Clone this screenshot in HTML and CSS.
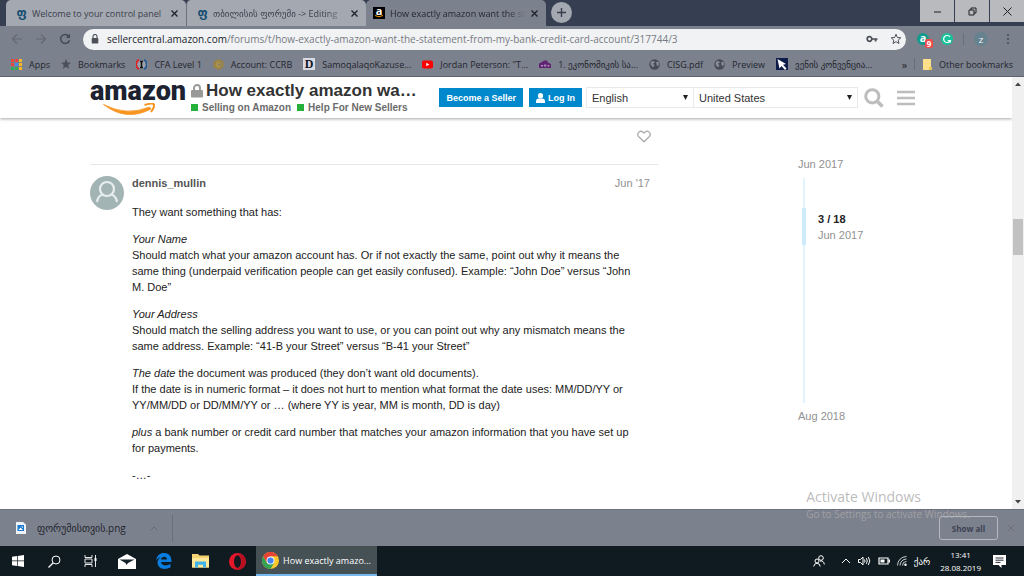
FILE: index.html
```html
<!DOCTYPE html>
<html lang="en">
<head>
    <meta charset="UTF-8">
    <meta name="viewport" content="width=device-width, initial-scale=1.0">
    <title>How exactly amazon want the statement</title>
    <link rel="stylesheet" href="styles.css">
</head>
<body>
    <!-- Tabs -->
    <div class="tab-strip">
        <div class="tab">
            <span class="favicon-geo">ფ</span>
            <span class="tab-title">Welcome to your control panel</span>
            <button class="tab-close" aria-label="Close tab"><svg width="7" height="7" viewBox="0 0 7 7"><path d="M.5 .5l6 6M6.5 .5l-6 6"/></svg></button>
        </div>
        <div class="tab">
            <span class="favicon-geo">ფ</span>
            <span class="tab-title fade">თბილისის ფორუმი -&gt; Editing</span>
            <button class="tab-close" aria-label="Close tab"><svg width="7" height="7" viewBox="0 0 7 7"><path d="M.5 .5l6 6M6.5 .5l-6 6"/></svg></button>
        </div>
        <div class="tab active">
            <span class="favicon-amazon">a<svg width="10" height="3" viewBox="0 0 10 3"><path d="M1 .5q4 2.5 8 0" fill="none" stroke="#f90"/></svg></span>
            <span class="tab-title fade">How exactly amazon want the sta</span>
            <button class="tab-close" aria-label="Close tab"><svg width="7" height="7" viewBox="0 0 7 7"><path d="M.5 .5l6 6M6.5 .5l-6 6"/></svg></button>
        </div>
        <button class="new-tab" aria-label="New tab"><svg width="9" height="9" viewBox="0 0 9 9"><path d="M4.5 0v9M0 4.5h9" stroke="#343c4e" stroke-width="1.4"/></svg></button>
        <div class="window-controls">
            <button aria-label="Minimize"><svg width="9" height="9" viewBox="0 0 9 9"><path d="M1 5h7"/></svg></button>
            <button aria-label="Restore"><svg width="9" height="9" viewBox="0 0 9 9"><path d="M1 3h5v5h-5zM3 3v-2h5v5h-2"/></svg></button>
            <button aria-label="Close"><svg width="9" height="9" viewBox="0 0 9 9"><path d="M.5 .5l8 8M8.500 .5l-8 8"/></svg></button>
        </div>
    </div>

    <!-- Address bar -->
    <div class="toolbar">
        <button class="nav-btn" aria-label="Back"><svg width="12" height="12" viewBox="0 0 12 12"><path d="M11 6h-9M6 1.500l-4.500 4.500l4.500 4.500" stroke="#636875"/></svg></button>
        <button class="nav-btn" aria-label="Forward"><svg width="12" height="12" viewBox="0 0 12 12"><path d="M1 6h9M6 1.500l4.500 4.500l-4.500 4.500" stroke="#636875"/></svg></button>
        <button class="nav-btn" aria-label="Reload"><svg width="12" height="12" viewBox="0 0 12 12"><path d="M9.800 3.200a4.500 4.500 0 1 0 .7 4" stroke="#444a57" stroke-width="1.500"/><path d="M11 .8v4.200h-4.200z" fill="#444a57" stroke="none"/></svg></button>
        <div class="address">
            <svg width="8" height="10" viewBox="0 0 8 10"><path d="M2 4.500v-2a2 2 0 0 1 4 0v2" fill="none" stroke="#4c5057" stroke-width="1.100"/><rect x=".7" y="4" width="6.600" height="5.500" rx=".7" fill="#4c5057"/></svg>
            <span class="url"><b>sellercentral.amazon.com</b>/forums/t/how-exactly-amazon-want-the-statement-from-my-bank-credit-card-account/317744/3</span>
            <svg width="12" height="8" viewBox="0 0 12 8"><circle cx="3.500" cy="4" r="2.300" fill="none" stroke="#4c5057" stroke-width="1.700"/><path d="M6 3.200h5.500v1.600h-1v1.700h-1.800v-1.700h-2.700z" fill="#4c5057"/></svg>
            <svg width="12" height="12" viewBox="0 0 12 12"><path d="M6 1.300l1.400 3.200l3.400.3l-2.600 2.300l.8 3.400l-3-1.800l-3 1.800l.8-3.400l-2.600-2.300l3.400-.3z" fill="none" stroke="#4c5057"/></svg>
        </div>
        <span class="ext ext-teal">a<em>9</em></span>
        <span class="ext ext-green"><svg width="12" height="12" viewBox="0 0 12 12"><path d="M9 4a3.500 3.500 0 1 0 .3 3.500h-2.600M9.300 7.500v2" fill="none" stroke="#fff" stroke-width="1.200"/></svg></span>
        <i class="divider"></i>
        <span class="ext profile">Z</span>
        <button class="menu-dots" aria-label="Menu"><svg width="4" height="12" viewBox="0 0 4 12"><g fill="#494e5b"><circle cx="2" cy="2" r="1.100"/><circle cx="2" cy="6" r="1.100"/><circle cx="2" cy="10" r="1.100"/></g></svg></button>
    </div>

    <!-- Bookmarks -->
    <nav class="bookmarks">
        <a href="#"><svg width="11" height="11" viewBox="0 0 11 11"><path d="M0 0h3v3h-3zM4 0h3v3h-3zM0 4h3v3h-3z" fill="#e8453c"/><path d="M8 0h3v3h-3zM8 4h3v3h-3zM8 8h3v3h-3z" fill="#f5b921"/><path d="M4 4h3v3h-3z" fill="#4687f1"/><path d="M0 8h3v3h-3zM4 8h3v3h-3z" fill="#2dab57"/></svg>Apps</a>
        <a href="#"><svg width="10" height="10" viewBox="0 0 12 12"><path d="M6 0l1.700 4.100l4.300.4l-3.300 2.800l1 4.400l-3.700-2.300l-3.700 2.300l1-4.400l-3.300-2.800l4.300-.4z" fill="#4b4f59"/></svg>Bookmarks</a>
        <a href="#"><svg width="11" height="11" viewBox="0 0 11 11"><circle cx="5.500" cy="5.500" r="4" fill="#9ba0aa"/><path d="M3 .8a5.300 5.300 0 0 0 0 9.400" fill="none" stroke="#e81c22" stroke-width="1.700"/><path d="M8 .8a5.300 5.300 0 0 1 0 9.400" fill="none" stroke="#225b98" stroke-width="1.700"/><path d="M4 2.500h3M4 8.500h3M5.500 2.500v6" stroke="#111" stroke-width="1.500"/></svg>CFA Level 1</a>
        <a href="#"><svg width="11" height="11" viewBox="0 0 12 12"><path d="M6 1l4.500 2.500v5l-4.500 2.500l-4.500-2.500v-5z" fill="#93845c" stroke="#a18335" stroke-width="1.500"/><path d="M7.800 4.500l-2-1l-2.200 1.500v2l2.200 1.500l2-1" fill="none" stroke="#c6a13c"/></svg>Account: CCRB</a>
        <a href="#"><span class="d-icon">D</span>SamoqalaqoKazuse...</a>
        <a href="#"><svg width="11" height="9" viewBox="0 0 11 9"><rect width="11" height="8" y=".5" rx="1.800" fill="#f00"/><path d="M4.300 2.700v3.600l3-1.800z" fill="#fff"/></svg>Jordan Peterson: "T...</a>
        <a href="#"><svg width="12" height="9" viewBox="0 0 12 9"><path d="M0 3.500l3-1.500l2-1.500h3l1 2l3 1.500v4h-12z" fill="#602473"/><path d="M2 5h2v1.500h-2zM5.200 4.500h2v2h-2zM8.500 5h1.800v1.500h-1.800z" fill="#b296bd"/></svg>1. ეკონომიკის სა...</a>
        <a href="#"><svg width="11" height="11" viewBox="0 0 11 11"><circle cx="5.500" cy="5.500" r="5.200" fill="#474b55"/><path d="M2 2.500l3-.5l1 1.500l-2 1l1.500 2l-1.500 2l-2.500-3zM7 3l2.500-.3l.5 3l-2 1.500z" fill="#858b97"/></svg>CISG.pdf</a>
        <a href="#"><svg width="11" height="11" viewBox="0 0 11 11"><circle cx="5.500" cy="5.500" r="5.200" fill="#474b55"/><path d="M2 2.500l3-.5l1 1.500l-2 1l1.500 2l-1.500 2l-2.500-3zM7 3l2.500-.3l.5 3l-2 1.500z" fill="#858b97"/></svg>Preview</a>
        <a href="#"><svg width="12" height="12" viewBox="0 0 12 12"><path d="M0 0h12v12h-12z" fill="#0d1c49"/><path d="M1.500 1l8.500 5l-3 .8l3.500 3.700l-1.500 1.500l-3.500-4l-2 2.500z" fill="#fff"/></svg>ვენის კონვენცია...</a>
        <button class="overflow" aria-label="More bookmarks">»</button>
        <i class="divider"></i>
        <a href="#"><svg width="10" height="11" viewBox="0 0 10 11"><path d="M1 0h8v11h-8z" fill="#ffe08a"/><path d="M7 8h3v3h-3z" fill="#eec455"/></svg>Other bookmarks</a>
    </nav>

    <!-- Forum page -->
    <div class="viewport">
        <div class="page">
            <header class="site-header">
                <a class="logo" href="#">amazon<svg width="56" height="12" viewBox="0 0 56 12"><path d="M.5 1.500q23 12 46 2.500l1.500 2q-25 13-47.500-4.500z" fill="#f79521" stroke="#f79521" stroke-width=".8"/><path d="M41.500 2q8.500-2.500 9.500-.5q.5 3-3 7.500" fill="none" stroke="#f79521" stroke-width="2"/></svg></a>
                <div class="topic">
                    <h1><svg width="12" height="14" viewBox="0 0 12 14"><path d="M3 7v-3a3 3 0 0 1 6 0v3" fill="none" stroke="#999" stroke-width="1.900"/><rect y="6" width="12" height="7.500" rx="1" fill="#999"/></svg><span>How exactly amazon wa…</span></h1>
                    <div class="categories">
                        <a href="#">Selling on Amazon</a>
                        <a href="#">Help For New Sellers</a>
                    </div>
                </div>
                <button class="btn">Become a Seller</button>
                <button class="btn"><svg width="9" height="10" viewBox="0 0 9 10"><circle cx="4.500" cy="2.700" r="2.600" fill="#fff"/><path d="M0 10v-1.500a3 3 0 0 1 3-3h3a3 3 0 0 1 3 3v1.500z" fill="#fff"/></svg>Log In</button>
                <div class="selects">
                    <div class="select language"><select aria-label="Language"><option>English</option></select></div>
                    <div class="select country"><select aria-label="Country"><option>United States</option></select></div>
                </div>
                <button class="icon-btn" aria-label="Search"><svg width="20" height="20" viewBox="0 0 20 20"><circle cx="8.300" cy="8.300" r="6.600" fill="none" stroke="#bdbdbd" stroke-width="3"/><path d="M13.200 13.200l5.300 5.300" stroke="#bdbdbd" stroke-width="3.600"/></svg></button>
                <button class="icon-btn" aria-label="Site menu"><svg width="18" height="16" viewBox="0 0 18 16"><path d="M0 2h18M0 8h18M0 14h18" stroke="#bdbdbd" stroke-width="2.500"/></svg></button>
            </header>

            <main class="content">
                <div class="posts">
                    <div class="post-actions">
                        <button class="icon-btn" aria-label="Like"><svg width="14" height="13" viewBox="0 0 14 13"><path d="M7 11.800l-5.200-5.100a3.100 3.100 0 0 1 4.300-4.500l.9.900l.9-.9a3.100 3.100 0 0 1 4.300 4.500z" fill="none" stroke="#aaa" stroke-width="1.200"/></svg></button>
                    </div>
                    <article class="post">
                        <svg class="avatar" width="34" height="34" viewBox="0 0 34 34"><circle cx="17" cy="17" r="17" fill="#a3b4b5"/><circle cx="17" cy="13" r="7" fill="none" stroke="#e8edee" stroke-width="2.200"/><path d="M7 26q1-6.500 6-7.500M27 26q-1-6.500-6-7.500" fill="none" stroke="#e8edee" stroke-width="2.200"/></svg>
                        <div class="post-body">
                            <div class="post-meta">
                                <a class="username" href="#">dennis_mullin</a>
                                <a class="post-date" href="#">Jun '17</a>
                            </div>
                            <div class="cooked">
                                <p>They want something that has:</p>
                                <p><em>Your Name</em><br>Should match what your amazon account has. Or if not exactly the same, point out why it means the same thing (underpaid verification people can get easily confused). Example: “John Doe” versus “John M. Doe”</p>
                                <p><em>Your Address</em><br>Should match the selling address you want to use, or you can point out why any mismatch means the same address. Example: “41-B your Street” versus “B-41 your Street”</p>
                                <p><em>The date</em> the document was produced (they don’t want old documents).<br>If the date is in numeric format – it does not hurt to mention what format the date uses: MM/DD/YY or YY/MM/DD or DD/MM/YY or … (where YY is year, MM is month, DD is day)</p>
                                <p><em>plus</em> a bank number or credit card number that matches your amazon information that you have set up for payments.</p>
                                <p>-…-</p>
                            </div>
                        </div>
                    </article>
                </div>
                <aside class="timeline">
                    <a href="#">Jun 2017</a>
                    <div class="track">
                        <div class="handle"><b>3 / 18</b><span>Jun 2017</span></div>
                    </div>
                    <a href="#">Aug 2018</a>
                </aside>
            </main>
        </div>
        <div class="scrollbar">
            <svg width="6" height="4" viewBox="0 0 6 4"><path d="M0 4l3-3.500l3 3.500z" fill="#444"/></svg>
            <div class="scroll-track"><div class="thumb"></div></div>
            <svg width="6" height="4" viewBox="0 0 6 4"><path d="M0 0l3 3.500l3-3.500z" fill="#444"/></svg>
        </div>
    </div>

    <!-- Downloads -->
    <div class="downloads">
        <svg width="10" height="12" viewBox="0 0 10 12"><path d="M0 0h7l3 2.500v9.500h-10z" fill="#eef2f6"/><path d="M1.500 3h6.500v6h-6.500z" fill="#1878d2"/><path d="M2.500 8l2-2.500l2.500 2.500zM5 4.500h2v1.500z" fill="#fff"/></svg>
        <span class="file-name">ფორუმისთვის.png</span>
        <svg class="chevron" width="8" height="5" viewBox="0 0 8 5"><path d="M.5 4.500l3.500-3.500l3.500 3.500" fill="none" stroke="#656a77"/></svg>
        <i class="divider"></i>
        <button class="show-all">Show all</button>
        <button class="icon-btn" aria-label="Close downloads"><svg width="8" height="8" viewBox="0 0 8 8"><path d="M.5 .5l7 7M7.500 .5l-7 7" stroke="#686d79"/></svg></button>
    </div>

    <!-- Taskbar -->
    <footer class="taskbar">
        <button class="task" aria-label="Start"><svg width="12" height="12" viewBox="0 0 12 12"><path d="M0 1.700l5-.7v4.600h-5zM5.700 .9l6.300-.9v5.600h-6.300zM0 6.300h5v4.700l-5-.7zM5.700 6.300h6.300v5.700l-6.300-.9z" fill="#fff"/></svg></button>
        <button class="task" aria-label="Search"><svg width="13" height="13" viewBox="0 0 13 13"><circle cx="8" cy="5" r="4" fill="none" stroke="#fff"/><path d="M5 8l-4.500 4.500" stroke="#fff" stroke-width="1.200"/></svg></button>
        <button class="task" aria-label="Task view"><svg width="13" height="12" viewBox="0 0 13 12"><path d="M1 0v2.500h7v-2.500M1 12v-2.500h7v2.500M1 4h7v4h-7zM11.500 0v12" fill="none" stroke="#e6e9ea"/><path d="M10.500 3h2v3h-2z" fill="#fff"/></svg></button>
        <button class="task app" aria-label="Mail"><svg width="18" height="15" viewBox="0 0 18 15"><path d="M0 5l9-5l9 5v10h-18z" fill="#fff"/><path d="M1.500 5.500h15l-6.500 3.500l-1.500 2l-1-2z" fill="#14222a"/></svg></button>
        <button class="task app" aria-label="Edge"><svg width="16" height="16" viewBox="0 0 16 16"><path d="M0 7.500c.7-5 4-7.500 8-7.500c5 0 7.700 3.700 7.500 9h-10.500c.3 3.500 5.500 4.500 9.500 2v3.300c-6 3.300-13 1.400-13-4.800c0-2.500 1.500-4.500 3.500-5.300c-2 .2-4 1.600-5 3.300zM5 6.500h6c0-4-5.500-3.500-6 0z" fill="#0a7ee0" fill-rule="evenodd"/></svg></button>
        <button class="task app" aria-label="File Explorer"><svg width="17" height="14" viewBox="0 0 17 14"><path d="M0 0h6l1.500 1.500h9.500v12h-17z" fill="#f4d470"/><path d="M0 4h17v9.500h-17z" fill="#ffe79a"/><path d="M3 13.500v-6h11v6h-3v-2.700h-5v2.700z" fill="#3fb2ea"/></svg></button>
        <button class="task app" aria-label="Opera"><svg width="17" height="17" viewBox="0 0 17 17"><circle cx="8.500" cy="8.500" r="8.500" fill="#e5172b"/><path d="M12 1c6 3 6 12 0 15c-2 1-4 .5-5.500-.8h3c4-2 4-11.400 0-13.400z" fill="#b60f20"/><ellipse cx="8.500" cy="8.500" rx="3.500" ry="6.300" fill="#14181f"/></svg></button>
        <button class="task running"><svg width="17" height="17" viewBox="0 0 18 18"><circle cx="9" cy="9" r="9" fill="#fbc92b"/><path d="M1.200 4.500a9 9 0 0 1 15.600 0h-7.800l-3.900 6.700z" fill="#e54335"/><path d="M1.200 4.500l3.900 6.800l7.800 0l-3.900 6.700a9 9 0 0 1-7.800-13.500z" fill="#35a155"/><circle cx="9" cy="9" r="4.200" fill="#fff"/><circle cx="9" cy="9" r="3.300" fill="#4383f2"/></svg>How exactly amazo...</button>
        <div class="tray">
            <svg width="12" height="12" viewBox="0 0 12 12"><g fill="none" stroke="#fff"><circle cx="8" cy="3" r="2.300"/><circle cx="4" cy="6" r="2"/><path d="M.7 11.500q.3-3 3.300-3.300q3 .3 3.200 3.300M7 6q4-.5 4.300 3.500"/></g></svg>
            <svg class="tray-up" width="10" height="6" viewBox="0 0 10 6"><path d="M1 5l4-4l4 4" fill="none" stroke="#fff"/></svg>
            <svg width="13" height="10" viewBox="0 0 13 10"><path d="M.5 3.500h2l2.500-2.500v8l-2.500-2.500h-2zM6.500 3.500q1 1.500 0 3M8.300 2.200q2 2.800 0 5.600M10.300 1q3 4 0 8" fill="none" stroke="#fff"/></svg>
            <svg width="12" height="8" viewBox="0 0 12 8"><path d="M1 1h9v6h-9z" fill="none" stroke="#fff" stroke-width="1.200"/><path d="M2.500 2.500h4v3h-4zM10.500 2.500h1.500v3h-1.500z" fill="#fff"/></svg>
            <svg width="10" height="10" viewBox="0 0 10 10"><path d="M.5 9.500a9 9 0 0 1 9-9M3 9.500a6.500 6.500 0 0 1 6.500-6.500M5.500 9.500a4 4 0 0 1 4-4" fill="none" stroke="#c9ced0"/><circle cx="8.500" cy="8.700" r="1.200" fill="#fff"/></svg>
            <span class="lang">ქარ</span>
            <div class="clock"><span>13:41</span><span>28.08.2019</span></div>
            <svg width="13" height="13" viewBox="0 0 13 13"><path d="M0 0h13v10h-4.500v3l-3-3h-5.500z" fill="#fff"/><path d="M2.500 3h8M2.500 5.200h8M2.500 7.400h5" stroke="#14181f" stroke-width=".9"/></svg>
        </div>
    </footer>

    <div class="watermark">
        <strong>Activate Windows</strong>
        <span>Go to Settings to activate Windows.</span>
    </div>
</body>
</html>
```
FILE: styles.css
```css
* {
    box-sizing: border-box;
}
body {
    margin: 0;
    height: 100vh;
    display: flex;
    flex-direction: column;
    overflow: hidden;
    font-family: "Open Sans", "DejaVu Sans", sans-serif;
    font-size: 9px;
    color: #23262d;
    background: #fff;
}
button {
    margin: 0;
    padding: 0;
    border: none;
    background: none;
    font: inherit;
    color: inherit;
    cursor: pointer;
}
a {
    color: inherit;
    text-decoration: none;
}
svg {
    flex: none;
    display: block;
}
.divider {
    width: 1px;
    height: 12px;
    background: #6a6f7c;
}

/* tabs */
.tab-strip {
    display: flex;
    height: 26px;
    padding-left: 6px;
    background: #363e51;
}
.tab {
    flex: 0 1 180px;
    min-width: 0;
    display: flex;
    align-items: center;
    gap: 5px;
    padding: 0 8px 0 10px;
    background: #a4a8b1;
    border-radius: 5px 5px 0 0;
    color: #3b414e;
}
.tab + .tab {
    border-left: 1px solid #6c7280;
}
.tab.active {
    padding-left: 7px;
    background: #7c818e;
    border-left: none;
    color: #23272f;
}
.tab-title {
    flex: 1;
    min-width: 0;
    overflow: hidden;
    white-space: nowrap;
}
.tab-title.fade {
    mask-image: linear-gradient(to right, #000 86%, transparent);
}
.tab-close svg {
    stroke: #1d2129;
    stroke-width: 1.3;
}
.favicon-geo {
    width: 11px;
    font: bold 12px "DejaVu Sans", sans-serif;
    color: #164e70;
    text-align: center;
}
.favicon-amazon {
    display: flex;
    flex-direction: column;
    align-items: center;
    width: 12px;
    height: 12px;
    background: #000;
    color: #fff;
    font-size: 11px;
    font-weight: bold;
    line-height: 8px;
}
.new-tab {
    display: flex;
    align-items: center;
    justify-content: center;
    width: 21px;
    height: 21px;
    margin: 2px 0 0 5px;
    border-radius: 50%;
    background: #a4a8b1;
}
.window-controls {
    display: flex;
    gap: 1px;
    height: 22px;
    margin-left: auto;
}
.window-controls button {
    display: flex;
    align-items: center;
    justify-content: center;
    width: 34px;
    background: #b9babd;
}
.window-controls svg {
    fill: none;
    stroke: #1d1e20;
}

/* address bar */
.toolbar {
    display: flex;
    align-items: center;
    height: 26px;
    padding: 0 14px 0 11px;
    background: #7c818e;
}
.nav-btn {
    width: 12px;
    margin-right: 12px;
}
.nav-btn svg {
    fill: none;
    stroke-width: 1.2;
}
.address {
    flex: 1;
    min-width: 0;
    display: flex;
    align-items: center;
    gap: 12px;
    height: 21px;
    margin-right: 11px;
    padding: 0 4px 0 8px;
    border-radius: 11px;
    background: #f1f2f4;
}
.url {
    flex: 1;
    min-width: 0;
    margin-left: -4px;
    overflow: hidden;
    white-space: nowrap;
    font-size: 10px;
    color: #777b82;
}
.url b {
    font-weight: normal;
    color: #202328;
}
.ext {
    position: relative;
    display: flex;
    align-items: center;
    justify-content: center;
    width: 12px;
    height: 12px;
    margin-right: 12px;
    border-radius: 50%;
    color: #fff;
    font-weight: bold;
}
.ext-teal {
    background: #139a8b;
    font-size: 11px;
    line-height: 10px;
    align-items: flex-start;
}
.ext-teal em {
    position: absolute;
    left: 8px;
    top: 6px;
    width: 8px;
    border-radius: 2px;
    background: #f04a4a;
    font-size: 8px;
    font-style: normal;
    line-height: 9px;
    text-align: center;
}
.ext-green {
    background: #15c39a;
    margin-right: 10px;
}
.profile {
    width: 14px;
    height: 14px;
    margin: 0 18px 0 10px;
    background: #66828f;
    font-size: 8px;
    font-weight: normal;
}

/* bookmarks */
.bookmarks {
    display: flex;
    align-items: center;
    gap: 11px;
    height: 25px;
    padding: 0 11px;
    background: #7c818e;
    border-bottom: 1px solid #5d6370;
    white-space: nowrap;
}
.bookmarks a {
    display: flex;
    align-items: center;
    gap: 7px;
}
.bookmarks .divider {
    margin: 0 -4px;
}
.overflow {
    margin-left: auto;
    font-size: 11px;
}
.d-icon {
    width: 12px;
    background: #d9dbe0;
    color: #111428;
    font: bold 12px/12px "Liberation Serif", serif;
    text-align: center;
}

/* forum page */
.viewport {
    flex: 1;
    min-height: 0;
    display: flex;
    font-family: "Liberation Sans", Arial, sans-serif;
    font-size: 11px;
    line-height: 16px;
}
.page {
    flex: 1;
    min-width: 0;
    overflow: hidden;
}
.site-header {
    display: flex;
    align-items: center;
    height: 41px;
    padding: 0 97px 0 90px;
    box-shadow: 0 1px 3px rgba(0,0,0,0.35);
}
.logo {
    display: flex;
    flex-direction: column;
    width: 96px;
    margin-right: 5px;
    color: #1c2230;
    font: 900 27px/20px Roboto, sans-serif;
}
.logo svg {
    margin: 2px 0 0 13px;
}
.topic {
    flex: 1;
    min-width: 0;
}
.topic h1 {
    display: flex;
    align-items: center;
    gap: 3px;
    margin: 0;
    font-size: 17px;
    line-height: 20px;
    color: #333;
    white-space: nowrap;
}
.categories {
    display: flex;
    gap: 6px;
    font-size: 10px;
    font-weight: bold;
    line-height: 14px;
    color: #6b6b6b;
    white-space: nowrap;
}
.categories a::before {
    content: "";
    display: inline-block;
    width: 7px;
    height: 7px;
    margin-right: 4px;
    background: #25b03c;
}
.btn {
    display: flex;
    align-items: center;
    gap: 3px;
    height: 19px;
    margin-right: 6px;
    padding: 0 7px;
    background: #0088cc;
    color: #fff;
    font-size: 9px;
    font-weight: bold;
    white-space: nowrap;
}
.selects {
    display: flex;
    margin: 0 6px 0 -2px;
}
.select {
    position: relative;
    border: 1px solid #e9e9e9;
}
.select + .select {
    border-left: none;
}
.select::after {
    content: "";
    position: absolute;
    right: 5px;
    top: 7px;
    width: 5px;
    height: 5px;
    background: #222;
    clip-path: polygon(0 0, 100% 0, 50% 100%);
    pointer-events: none;
}
.select select {
    appearance: none;
    width: 100%;
    height: 19px;
    padding: 0 5px;
    border: none;
    background: transparent;
    color: #333;
    font: 11px "Liberation Sans", Arial, sans-serif;
}
.language {
    width: 108px;
}
.country {
    width: 164px;
}
.site-header .icon-btn + .icon-btn {
    margin-left: 13px;
}
.content {
    display: flex;
    gap: 140px;
    padding: 12px 0 0 90px;
}
.posts {
    width: 568px;
    color: #222;
}
.post-actions {
    display: flex;
    justify-content: flex-end;
    height: 34px;
    padding-right: 7px;
    align-items: flex-start;
}
.post {
    display: flex;
    gap: 8px;
    padding-top: 11px;
    border-top: 1px solid #e6e6e6;
}
.post-body {
    flex: 1;
    margin-top: -1px;
}
.post-meta {
    display: flex;
    justify-content: space-between;
    padding-right: 8px;
}
.username {
    color: #555;
    font-weight: bold;
}
.post-date {
    color: #919191;
}
.cooked {
    max-width: 512px;
    padding-top: 13px;
}
.cooked p {
    margin: 0 0 11px;
}
.timeline {
    padding-top: 26px;
    color: #919191;
}
.track {
    height: 225px;
    margin: 6px 0 5px 5px;
    padding-top: 30px;
    border-left: 2px solid #e2f3fd;
}
.handle {
    display: flex;
    flex-direction: column;
    justify-content: center;
    height: 37px;
    margin-left: -3px;
    padding-left: 12px;
    border-left: 4px solid #cdebfb;
}
.handle b {
    color: #222;
}
.scrollbar {
    display: flex;
    flex-direction: column;
    align-items: center;
    width: 12px;
    padding: 5px 0;
    background: #f0f0f0;
}
.scroll-track {
    flex: 1;
    width: 10px;
    padding-top: 133px;
}
.thumb {
    height: 36px;
    background: #c1c1c1;
}

/* downloads */
.downloads {
    display: flex;
    align-items: center;
    height: 37px;
    padding: 0 9px 0 16px;
    background: #7c818e;
    border-top: 1px solid #6a6f7b;
}
.file-name {
    margin: 0 24px 0 11px;
    font-size: 10px;
}
.downloads .divider {
    height: 27px;
    margin-left: 14px;
}
.show-all {
    width: 59px;
    height: 24px;
    margin: 0 9px 0 auto;
    border: 1px solid #b4b7be;
    border-radius: 3px;
    color: #3c4352;
    font-size: 8px;
    font-weight: bold;
}

/* taskbar */
.taskbar {
    display: flex;
    height: 30px;
    background: #101b21;
    color: #fff;
}
.task {
    display: flex;
    align-items: center;
    justify-content: center;
    width: 36px;
}
.task.app {
    width: 37px;
}
.task.running {
    width: 121px;
    gap: 4px;
    background: #465156;
    border-bottom: 2px solid #76b9ed;
    white-space: nowrap;
}
.tray {
    display: flex;
    align-items: center;
    gap: 7px;
    margin-left: auto;
    padding-right: 18px;
}
.tray-up {
    margin-left: 9px;
}
.clock {
    display: flex;
    flex-direction: column;
    margin: 0 5px 0 3px;
    text-align: center;
    line-height: 13px;
    font-size: 8px;
}

.watermark {
    position: absolute;
    right: 54px;
    bottom: 55px;
    display: flex;
    flex-direction: column;
    color: rgba(170,170,170,0.8);
    font-size: 10px;
    line-height: 14px;
    pointer-events: none;
}
.watermark strong {
    font-size: 14px;
    font-weight: normal;
    line-height: 20px;
}
```
